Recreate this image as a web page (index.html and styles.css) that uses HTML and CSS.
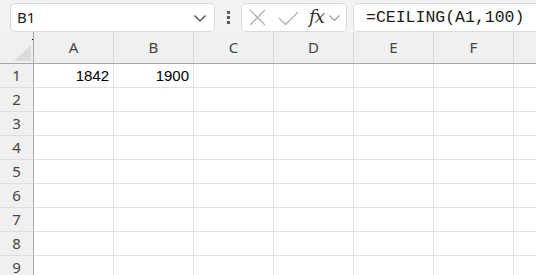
FILE: index.html
```html
<!DOCTYPE html>
<html>
<head>
<meta charset="utf-8">
<link rel="stylesheet" href="styles.css">
</head>
<body>
<div class="toolbar">
  <div class="namebox">
    <span class="name">B1</span>
    <svg class="nb-chev" width="12" height="7" viewBox="0 0 12 7"><path d="M0.5 0.5 L6 6 L11.5 0.5" fill="none" stroke="#444" stroke-width="1.2"/></svg>
  </div>
  <div class="dots"><i></i><i></i><i></i></div>
  <div class="fxbox">
    <svg class="ico-x" width="17" height="17" viewBox="0 0 17 17"><path d="M1 1 L16 16 M16 1 L1 16" stroke="#b3b3b3" stroke-width="1.3" fill="none"/></svg>
    <svg class="ico-ok" width="21" height="15" viewBox="0 0 21 15"><path d="M1 7 L7.5 13.5 L20 1" stroke="#b3b3b3" stroke-width="1.3" fill="none"/></svg>
    <span class="fx">fx</span>
    <svg class="fx-chev" width="11" height="6" viewBox="0 0 11 6"><path d="M0.5 0.5 L5.5 5.5 L10.5 0.5" fill="none" stroke="#999" stroke-width="1.1"/></svg>
  </div>
  <div class="formula">=CEILING(A1,100)</div>
</div>
<div class="sheet">
  <div class="row head">
    <div class="rh corner"><span class="tri"></span><span class="pix"></span></div>
    <div class="ch">A</div><div class="ch">B</div><div class="ch">C</div><div class="ch">D</div><div class="ch">E</div><div class="ch">F</div><div class="ch last"></div>
  </div>
  <div class="row"><div class="rh">1</div><div class="c">1842</div><div class="c">1900</div><div class="c"></div><div class="c"></div><div class="c"></div><div class="c"></div><div class="c last"></div></div>
  <div class="row"><div class="rh">2</div><div class="c"></div><div class="c"></div><div class="c"></div><div class="c"></div><div class="c"></div><div class="c"></div><div class="c last"></div></div>
  <div class="row"><div class="rh">3</div><div class="c"></div><div class="c"></div><div class="c"></div><div class="c"></div><div class="c"></div><div class="c"></div><div class="c last"></div></div>
  <div class="row"><div class="rh">4</div><div class="c"></div><div class="c"></div><div class="c"></div><div class="c"></div><div class="c"></div><div class="c"></div><div class="c last"></div></div>
  <div class="row"><div class="rh">5</div><div class="c"></div><div class="c"></div><div class="c"></div><div class="c"></div><div class="c"></div><div class="c"></div><div class="c last"></div></div>
  <div class="row"><div class="rh">6</div><div class="c"></div><div class="c"></div><div class="c"></div><div class="c"></div><div class="c"></div><div class="c"></div><div class="c last"></div></div>
  <div class="row"><div class="rh">7</div><div class="c"></div><div class="c"></div><div class="c"></div><div class="c"></div><div class="c"></div><div class="c"></div><div class="c last"></div></div>
  <div class="row"><div class="rh">8</div><div class="c"></div><div class="c"></div><div class="c"></div><div class="c"></div><div class="c"></div><div class="c"></div><div class="c last"></div></div>
  <div class="row"><div class="rh">9</div><div class="c"></div><div class="c"></div><div class="c"></div><div class="c"></div><div class="c"></div><div class="c"></div><div class="c last"></div></div>
</div>
</body>
</html>
```
FILE: styles.css
```css
html, body {
  margin: 0;
  padding: 0;
  width: 536px;
  height: 275px;
  overflow: hidden;
  background: #ffffff;
}
body {
  font-family: "Noto Sans", sans-serif;
}
.toolbar {
  height: 32px;
  box-sizing: border-box;
  background: #f3f3f3;
  display: flex;
  align-items: flex-start;
  padding-top: 3px;
  white-space: nowrap;
  overflow: hidden;
}
.toolbar > * {
  flex-shrink: 0;
}
.namebox {
  margin-left: 10px;
  width: 205px;
  height: 29px;
  box-sizing: border-box;
  background: #fff;
  border: 1px solid #dadada;
  border-radius: 5px;
  display: flex;
  align-items: center;
  justify-content: space-between;
  padding: 0 8px 0 6px;
}
.name {
  font-size: 15px;
  color: #222;
  line-height: 1;
}
.nb-chev { display: block; margin-top: 2px; }
.dots {
  margin-left: 12px;
  width: 3px;
  height: 29px;
  display: flex;
  flex-direction: column;
  justify-content: center;
  gap: 2px;
}
.dots i {
  display: block;
  width: 3px;
  height: 3px;
  background: #5a5a5a;
}
.fxbox {
  margin-left: 11px;
  width: 106px;
  height: 29px;
  box-sizing: border-box;
  background: #fff;
  border: 1px solid #dadada;
  border-radius: 5px;
  display: flex;
  align-items: center;
  padding-left: 7px;
}
.ico-x { display: block; }
.ico-ok { display: block; margin-left: 12px; margin-top: 1px; }
.fx {
  margin-left: 10px;
  font-family: "DejaVu Serif", "Liberation Serif", serif;
  font-style: italic;
  font-weight: normal;
  font-size: 18px;
  color: #333;
  line-height: 1;
  letter-spacing: -1px;
  margin-top: -2px;
}
.fx-chev { display: block; margin-left: 5px; margin-top: 1px; }
.formula {
  margin-left: 6px;
  width: 200px;
  height: 29px;
  box-sizing: border-box;
  background: #fff;
  border: 1px solid #dadada;
  border-radius: 5px;
  padding-left: 12px;
  font-family: "Liberation Mono", monospace;
  font-size: 16.5px;
  color: #1a1a1a;
  line-height: 27px;
}
.sheet {
  display: flex;
  flex-direction: column;
}
.row {
  display: flex;
  height: 24px;
  box-sizing: border-box;
}
.row.head {
  height: 32px;
  background: #f0f0f0;
  border-bottom: 1px solid #a8a8a8;
}
.rh {
  flex: 0 0 34px;
  box-sizing: border-box;
  background: #f0f0f0;
  border-right: 1px solid #a8a8a8;
  border-bottom: 1px solid #dedede;
  text-align: center;
  font-size: 15px;
  color: #444;
  line-height: 23px;
}
.row.head .rh {
  border-bottom: none;
  position: relative;
}
.tri {
  position: absolute;
  right: 2px;
  bottom: 2px;
  width: 0;
  height: 0;
  border-left: 17px solid transparent;
  border-bottom: 16px solid #dcdcdc;
}
.pix {
  position: absolute;
  right: 0;
  top: 7px;
  width: 1px;
  height: 1px;
  background: #000;
}
.ch {
  flex: 0 0 80px;
  box-sizing: border-box;
  border-right: 1px solid #dadada;
  text-align: center;
  font-size: 15px;
  color: #444;
  line-height: 31px;
}
.c {
  flex: 0 0 80px;
  box-sizing: border-box;
  border-right: 1px solid #e1e1e1;
  border-bottom: 1px solid #e1e1e1;
  text-align: right;
  padding-right: 4px;
  font-family: "Liberation Sans", Arial, sans-serif;
  font-size: 15px;
  color: #000;
  line-height: 23px;
}
.last {
  flex: 1 1 auto;
  border-right: none;
}
```
